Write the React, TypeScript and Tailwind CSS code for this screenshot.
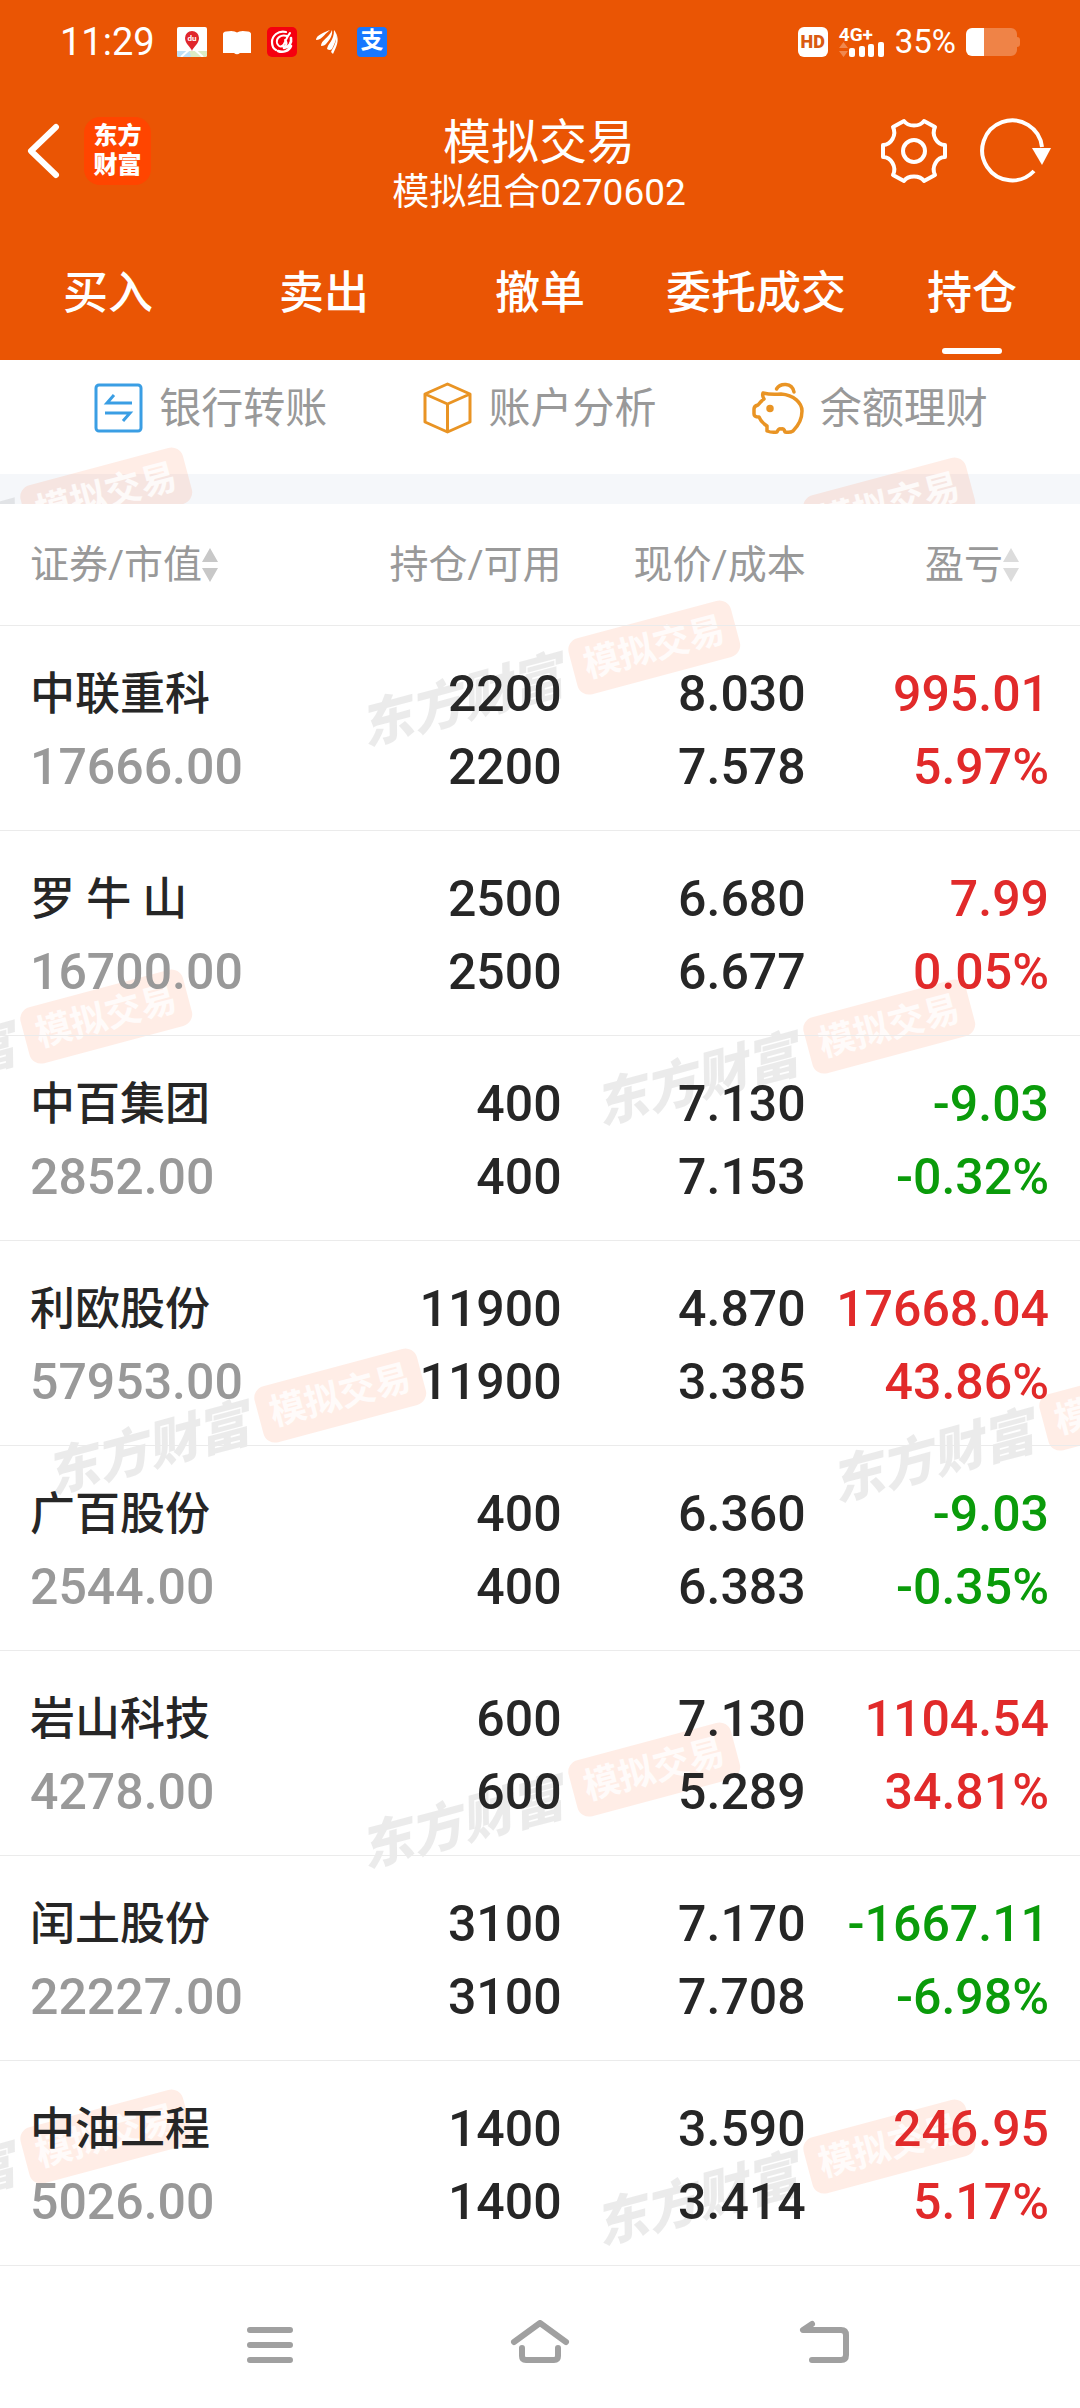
import type { CSSProperties } from "react"

interface Holding {
  name: string
  value: string
  amount: string
  available: string
  price: string
  cost: string
  profit: string
  rate: string
}

const holdings: Holding[] = [
  { name: "中联重科", value: "17666.00", amount: "2200", available: "2200", price: "8.030", cost: "7.578", profit: "995.01", rate: "5.97%" },
  { name: "罗 牛 山", value: "16700.00", amount: "2500", available: "2500", price: "6.680", cost: "6.677", profit: "7.99", rate: "0.05%" },
  { name: "中百集团", value: "2852.00", amount: "400", available: "400", price: "7.130", cost: "7.153", profit: "-9.03", rate: "-0.32%" },
  { name: "利欧股份", value: "57953.00", amount: "11900", available: "11900", price: "4.870", cost: "3.385", profit: "17668.04", rate: "43.86%" },
  { name: "广百股份", value: "2544.00", amount: "400", available: "400", price: "6.360", cost: "6.383", profit: "-9.03", rate: "-0.35%" },
  { name: "岩山科技", value: "4278.00", amount: "600", available: "600", price: "7.130", cost: "5.289", profit: "1104.54", rate: "34.81%" },
  { name: "闰土股份", value: "22227.00", amount: "3100", available: "3100", price: "7.170", cost: "7.708", profit: "-1667.11", rate: "-6.98%" },
  { name: "中油工程", value: "5026.00", amount: "1400", available: "1400", price: "3.590", cost: "3.414", profit: "246.95", rate: "5.17%" },
]

const tabs = ["买入", "卖出", "撤单", "委托成交", "持仓"]

// Centros de cada marca de agua dentro de su sección
const topMarks = [
  [0, 163],
  [783, 173],
]
const tableMarks = [
  [548, 172],
  [0, 541],
  [783, 551],
  [234, 920],
  [1019, 928],
  [548, 1294],
  [0, 1661],
  [783, 1671],
]

function Watermarks({ points }: { points: number[][] }) {
  return (
    <div className="pointer-events-none absolute inset-0 overflow-hidden" aria-hidden="true">
      {points.map(([x, y], index) => {
        const place: CSSProperties = { left: x, top: y }
        return (
          <div
            key={index}
            style={place}
            className="absolute flex -translate-x-1/2 -translate-y-1/2 -rotate-15 items-center gap-3 whitespace-nowrap"
          >
            <span className="pt-1.5 text-[52px] leading-[60px] font-black text-black/8 italic">东方财富</span>
            <span className="rounded-xl bg-[#ff5a1e]/11 px-3 text-[36px] leading-[58px] font-bold text-white/80">
              模拟交易
            </span>
          </div>
        )
      })}
    </div>
  )
}

function StatusBar() {
  return (
    <div className="flex h-[84px] items-center justify-between px-[60px]">
      <div className="flex items-center gap-4">
        <span className="w-[101px] text-[38px] leading-[44px]">11:29</span>
        {/* Mapa */}
        <svg width="30" height="30" viewBox="0 0 30 30">
          <rect width="30" height="30" rx="2" fill="#fff" />
          <path d="M0 22h30v6a2 2 0 0 1-2 2H2a2 2 0 0 1-2-2z" fill="#dcebc4" />
          <path d="M0 22h12l2 8H2a2 2 0 0 1-2-2z" fill="#bfe0f5" />
          <path d="M13 22 4 30M17 22l9 8M0 23h30" stroke="#fff" strokeWidth="2" />
          <path d="M15 24c-1-4-7-7-7-13a7 7 0 0 1 14 0c0 6-6 9-7 13z" fill="#e0262c" />
          <text x="15" y="14" fontSize="8" fontWeight="700" textAnchor="middle" fill="#fff">du</text>
        </svg>
        {/* Libro */}
        <svg width="28" height="30" viewBox="0 0 28 30">
          <path d="M0 7q0-2 3-2.500 8-1.500 11 1 3-2.500 11-1 3 .5 3 2.500v19H17q-3 2.500-6 0H0z" fill="#fff" />
        </svg>
        <svg width="30" height="30" viewBox="0 0 30 30">
          <rect width="30" height="30" rx="5" fill="#f5000f" />
          <g fill="none" stroke="#fff" strokeLinecap="round">
            <path d="M19 5C11 3 5 9 5 15c0 4 2 7 4 8" strokeWidth="2.200" />
            <path d="M20 9c-6-2-11 2-10 7 1 3 3 4 5 3 3-1 3-7 8-13M15 19c4 2 6-3 3-6" strokeWidth="2" />
            <path d="M24 11c1 5-2 9-7 10M11 24c5 2 11 0 13-5" strokeWidth="2.600" />
          </g>
        </svg>
        <svg width="28" height="30" viewBox="0 0 28 30">
          <g fill="#fff">
            <path d="M3 13c0-5 9-8 14-10-5 4-6 6-10 9q-2 1-4 1z" />
            <path d="M8 19c0-6 8-8 11-16 1 6-3 11-7 15q-2 1-4 1z" />
            <path d="M14 22c1-6 7-8 7-19 5 5 1 13-2 19q-2 2-5 0z" />
            <path d="M18 25c3-6 6-10 5-19 4 8 0 14-3 21z" />
          </g>
        </svg>
        <span className="h-[30px] w-[30px] rounded-sm bg-[#1677ff] text-center text-[23px] leading-[28px] font-bold">支</span>
      </div>

      <div className="flex items-center">
        <span className="mr-[11px] h-[30px] w-[30px] rounded-md bg-white text-center text-[18px] leading-[30px] font-black text-[#d95a12]">
          HD
        </span>
        <div className="mr-[10px] h-[30px] w-[46px]">
          <div className="text-[19px] leading-[15px] font-bold">4G+</div>
          <svg width="46" height="15" viewBox="0 0 46 15">
            <path d="M0 6 4.500 0 9 6zM0 9h9l-4.500 6z" fill="#fff" opacity=".3" />
            <g fill="#fff">
              <rect x="10" y="6" width="6" height="9" rx="2" />
              <rect x="20" y="4" width="6" height="11" rx="2" />
              <rect x="29" y="2" width="6" height="13" rx="2" />
              <rect x="39" y="0" width="6" height="15" rx="2" />
            </g>
          </svg>
        </div>
        <span className="mr-[10px] text-[33px] leading-[38px]">35%</span>
        <svg width="54" height="28" viewBox="0 0 54 28">
          <path d="M18 0h27a6 6 0 0 1 6 6v3q3 0 3 3v4q0 3-3 3v3a6 6 0 0 1-6 6H18z" fill="#fff" opacity=".27" />
          <path d="M18 0H6a6 6 0 0 0-6 6v16a6 6 0 0 0 6 6h12z" fill="#fff" />
        </svg>
      </div>
    </div>
  )
}

function Header() {
  return (
    <header className="bg-[#ea5504] text-white">
      <StatusBar />

      <div className="flex h-[134px] items-center">
        <div className="flex flex-1 items-center gap-6 pl-[27px]">
          <button type="button" aria-label="返回">
            <svg width="33" height="56" viewBox="0 0 33 56" fill="none" stroke="#fff" strokeWidth="6" strokeLinecap="round">
              <path d="M29 4 4 28l25 24" strokeLinejoin="round" />
            </svg>
          </button>
          <div className="w-[67px] rounded-2xl bg-[#ff4500] px-[9px] py-[5px] text-center text-[24px] leading-[29px] font-black">
            东方财富
          </div>
        </div>
        <div className="pt-[28px] text-center">
          <h1 className="text-[48px] leading-[56px]">模拟交易</h1>
          <p className="text-[37px] leading-[44px]">模拟组合0270602</p>
        </div>
        <div className="flex flex-1 items-center justify-end gap-8 pr-[29px]">
          <button type="button" aria-label="设置">
            <svg width="68" height="68" viewBox="-34 -34 68 68" fill="none" stroke="#fff" strokeWidth="4" strokeLinejoin="round">
              <path d="M-10-30C-6-24 6-24 10-30L21-24C17-16 23-6 31-6V6C23 6 17 16 21 24L10 30C6 24-6 24-10 30L-21 24C-17 16-23 6-31 6V-6C-23-6-17-16-21-24Z" />
              <circle r="11" />
            </svg>
          </button>
          <button type="button" aria-label="刷新">
            <svg width="71" height="68" viewBox="-32 -34 71 68">
              <path d="M22 20A30 30 0 1 1 30-4" fill="none" stroke="#fff" strokeWidth="4" />
              <path d="M20-3h19l-9 17z" fill="#fff" />
            </svg>
          </button>
        </div>
      </div>

      <nav className="grid h-[142px] grid-cols-5">
        {tabs.map((tab) => {
          const isActive = tab === "持仓"
          return (
            <button key={tab} type="button" className="relative pt-[10px] text-[45px] leading-[60px] font-medium">
              {tab}
              {isActive && (
                <span className="absolute bottom-1.5 left-1/2 h-1.5 w-[60px] -translate-x-1/2 rounded-full bg-white" />
              )}
            </button>
          )
        })}
      </nav>
    </header>
  )
}

function QuickLinks() {
  return (
    <section className="relative overflow-hidden">
      <div className="grid h-[114px] grid-cols-3 px-[46px] text-[42px] leading-[60px] text-[#999]">
        <a href="#transfer" className="flex items-center justify-center gap-4 pb-4">
          <svg width="49" height="52" viewBox="0 0 49 52" fill="none" stroke="#3a9ee4" strokeWidth="3">
            <rect x="2" y="2" width="45" height="46" rx="3" />
            <path d="M20 12 13 20h25M11 30h25l-7 8" />
          </svg>
          银行转账
        </a>
        <a href="#analysis" className="flex items-center justify-center gap-4 pb-4">
          <svg width="49" height="54" viewBox="0 0 49 54" fill="none" stroke="#e99424" strokeWidth="3" strokeLinejoin="round">
            <path d="M24.500 2 47 12v28L24.500 50 2 40V12zM2 12l22.500 10L47 12M24.500 22v28" />
          </svg>
          账户分析
        </a>
        <a href="#wealth" className="flex items-center justify-center gap-4 pb-4">
          <svg width="53" height="54" viewBox="0 0 53 54" fill="none" stroke="#e99424" strokeWidth="3.500" strokeLinejoin="round" strokeLinecap="round">
            <path d="M25.500 7C29 1 41 0 43 10" />
            <path d="M12 11Q20 13 30 12C43 13 51 21 51 29Q51 40 42 49Q39 51 34 50Q33 46 30 47Q28 46 26 50Q21 51 16 49V44Q10 40 8 35Q3 35 3 32V27Q3 24 7 23Q10 19 13 17Q11 14 12 11Z" />
            <circle cx="19" cy="26.500" r="2" fill="#e99424" />
          </svg>
          余额理财
        </a>
      </div>
      <div className="h-[30px] bg-[#f5f7fa]" />
      <Watermarks points={topMarks} />
    </section>
  )
}

function SortIcon({ faded = false }: { faded?: boolean }) {
  return (
    <svg width="16" height="34" viewBox="0 0 16 34" className={faded ? "text-[#dcdcdc]" : "text-[#c8c8c8]"}>
      <path d="M8 0l8 14H0zM0 20h16L8 34z" fill="currentColor" />
    </svg>
  )
}

function HoldingRow({ item }: { item: Holding }) {
  const color = item.profit.startsWith("-") ? "text-[#0a9b0a]" : "text-[#e12a2a]"
  return (
    <tr className="h-[205px] border-b border-[#ebebeb] text-right align-top text-[50px] leading-[73px] font-medium text-[#262626]">
      <td className="pt-8 pl-[30px] text-left">
        <div className="text-[45px]">{item.name}</div>
        <div className="text-[#999]">{item.value}</div>
      </td>
      <td className="pt-8">
        <div>{item.amount}</div>
        <div>{item.available}</div>
      </td>
      <td className="pt-8">
        <div>{item.price}</div>
        <div>{item.cost}</div>
      </td>
      <td className={`pt-8 pr-[31px] ${color}`}>
        <div>{item.profit}</div>
        <div>{item.rate}</div>
      </td>
    </tr>
  )
}

function HoldingsTable() {
  return (
    <section className="relative overflow-hidden">
      <Watermarks points={tableMarks} />
      <table className="relative w-full table-fixed border-collapse">
        <colgroup>
          <col className="w-[29%]" />
          <col className="w-[23%]" />
          <col className="w-[22.600%]" />
          <col />
        </colgroup>
        <thead>
          <tr className="h-[121px] border-b border-[#ebebeb] text-right text-[39px] leading-[56px] text-[#999]">
            <th className="pt-0.5 pl-[30px] text-left font-normal">
              <button type="button" className="flex items-center">
                证券/市值
                <SortIcon />
              </button>
            </th>
            <th className="pt-0.5 font-normal">持仓/可用</th>
            <th className="pt-0.5 font-normal">现价/成本</th>
            <th className="pt-0.5 pr-[61px] font-normal">
              <button type="button" className="ml-auto flex items-center">
                盈亏
                <SortIcon faded />
              </button>
            </th>
          </tr>
        </thead>
        <tbody>
          {holdings.map((item) => (
            <HoldingRow key={item.name} item={item} />
          ))}
        </tbody>
      </table>
    </section>
  )
}

function SystemNav() {
  return (
    <footer className="flex h-[143px] items-center justify-center">
      <div className="grid w-3/4 grid-cols-3 justify-items-center pt-4">
        <button type="button" aria-label="菜单">
          <svg width="100" height="50" viewBox="0 0 100 50" fill="none" stroke="#a0a0a0" strokeWidth="6" strokeLinecap="round">
            <path d="M30 10h40M30 25h40M30 40h40" />
          </svg>
        </button>
        <button type="button" aria-label="主页">
          <svg width="100" height="50" viewBox="0 0 100 50" fill="none" stroke="#a0a0a0" strokeWidth="6" strokeLinecap="round" strokeLinejoin="round">
            <path d="M24 22 50 3l26 19M32 28v8q0 4 4 4h28q4 0 4-4v-8" />
          </svg>
        </button>
        <button type="button" aria-label="后退">
          <svg width="100" height="50" viewBox="0 0 100 50" fill="none" stroke="#a0a0a0" strokeWidth="6" strokeLinecap="round" strokeLinejoin="round">
            <path d="M52 4 43 10h38q5 0 5 5v20q0 5-5 5H52" />
          </svg>
        </button>
      </div>
    </footer>
  )
}

export default function App() {
  return (
    <div className="min-h-screen w-full overflow-hidden bg-white font-[Roboto,'Noto_Sans_CJK_SC',sans-serif]" lang="zh-CN">
      <Header />
      <main>
        <QuickLinks />
        <HoldingsTable />
      </main>
      <SystemNav />
    </div>
  )
}
